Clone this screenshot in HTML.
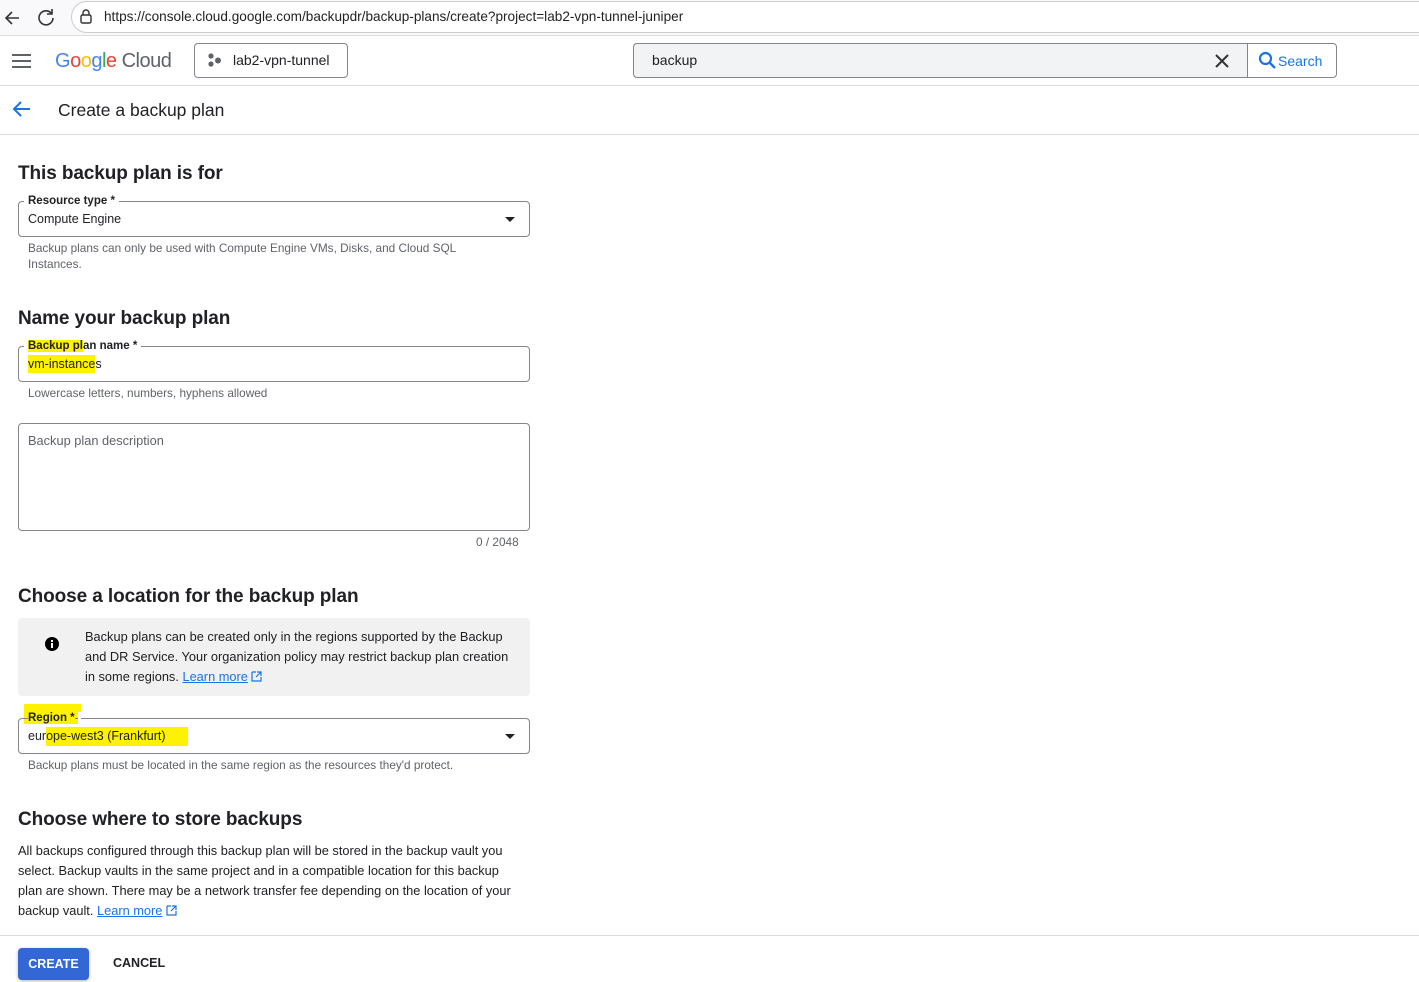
<!DOCTYPE html>
<html><head><meta charset="utf-8"><style>
*{box-sizing:border-box;margin:0;padding:0}
body{width:1419px;height:982px;overflow:hidden;background:#fff;font-family:"Liberation Sans",Arial,sans-serif;color:#202124;position:relative}
.a{position:absolute}
.h2{font-size:19px;font-weight:bold;color:#202124;left:18px;letter-spacing:-0.1px}
.field{left:18px;width:512px;height:36px;border:1px solid #80868b;border-radius:4px}
.lab{font-size:11.5px;font-weight:bold;background:#fff;padding:0 4px 0 4px;left:5px;top:-7px;color:#202124}
.val{font-size:12.5px;left:9px;top:10px}
.help{font-size:11.8px;color:#5f6368;left:28px;line-height:16px}
.hl{background:#fff200}
.caret{right:14px;top:15px;width:0;height:0;border-left:5px solid transparent;border-right:5px solid transparent;border-top:5px solid #202124}
a{color:#1a73e8;text-decoration:underline}
.p{white-space:nowrap}
</style></head><body>
<div class="a" style="left:0;top:0;width:1419px;height:36px;background:#f9f9fb;border-bottom:1px solid #ddd"></div>
<svg class="a" style="left:2px;top:8px" width="20" height="20"><path d="M17 10H4M10 4L4 10L10 16" stroke="#333" stroke-width="1.6" fill="none"/></svg>
<svg class="a" style="left:36px;top:7px" width="20" height="20"><path d="M15.5 6.5A7 7 0 1 0 17 11" stroke="#333" stroke-width="1.6" fill="none"/><path d="M16 2v5h-5" stroke="#333" stroke-width="1.6" fill="none"/></svg>
<div class="a" style="left:71px;top:1px;width:1400px;height:32px;border:1px solid #ccc;border-radius:16px;background:#fff"></div>
<svg class="a" style="left:79px;top:9px" width="14" height="16"><rect x="2" y="6" width="10" height="8" rx="1.5" stroke="#333" fill="none" stroke-width="1.4"/><path d="M4 6V4a3 3 0 0 1 6 0v2" stroke="#333" fill="none" stroke-width="1.4"/></svg>
<div class="a" style="left:104px;top:9px;font-size:13.6px;color:#222">https://console.cloud.google.com/backupdr/backup-plans/create?project=lab2-vpn-tunnel-juniper</div>
<div class="a" style="left:12px;top:54px;width:19px;height:2px;background:#5f6368;box-shadow:0 6px 0 #5f6368,0 12px 0 #5f6368"></div>
<div class="a" style="left:55px;top:50px;font-size:20px;letter-spacing:-0.5px"><span style="color:#4285f4">G</span><span style="color:#ea4335">o</span><span style="color:#fbbc05">o</span><span style="color:#4285f4">g</span><span style="color:#34a853">l</span><span style="color:#ea4335">e</span> <span style="color:#5f6368">Cloud</span></div>
<div class="a" style="left:194px;top:43px;width:154px;height:35px;border:1px solid #80868b;border-radius:4px"></div>
<svg class="a" style="left:207px;top:53px" width="16" height="16"><circle cx="4" cy="3" r="2.6" fill="#5f6368"/><circle cx="4" cy="11" r="2.6" fill="#5f6368"/><circle cx="11" cy="7.5" r="3" fill="#5f6368"/></svg>
<div class="a" style="left:233px;top:52px;font-size:14px">lab2-vpn-tunnel</div>
<div class="a" style="left:633px;top:43px;width:615px;height:35px;border:1px solid #80868b;border-right:none;border-radius:4px 0 0 4px;background:#f1f3f4"></div>
<div class="a" style="left:652px;top:52px;font-size:14px">backup</div>
<svg class="a" style="left:1215px;top:54px" width="14" height="14"><path d="M1 1L13 13M13 1L1 13" stroke="#333" stroke-width="2"/></svg>
<div class="a" style="left:1247px;top:43px;width:90px;height:35px;border:1px solid #80868b;border-radius:0 4px 4px 0"></div>
<svg class="a" style="left:1258px;top:51px" width="19" height="19"><circle cx="7.5" cy="7.5" r="5.5" stroke="#1a73e8" stroke-width="2.2" fill="none"/><path d="M11.5 11.5L17 17" stroke="#1a73e8" stroke-width="2.4"/></svg>
<div class="a" style="left:1278px;top:53px;font-size:14px;color:#1a73e8">Search</div>
<div class="a" style="left:0;top:85px;width:1419px;height:1px;background:#dadce0"></div>
<svg class="a" style="left:12px;top:100px" width="20" height="18"><path d="M18 9H3M9 2L2 9L9 16" stroke="#1a73e8" stroke-width="2" fill="none"/></svg>
<div class="a" style="left:58px;top:100px;font-size:17.5px">Create a backup plan</div>
<div class="a" style="left:0;top:134px;width:1419px;height:1px;background:#dadce0"></div>

<div class="a h2" style="top:163px">This backup plan is for</div>
<div class="a field" style="top:201px"><div class="a lab">Resource type *</div><div class="a val">Compute Engine</div><div class="a caret"></div></div>
<div class="a help" style="top:240px">Backup plans can only be used with Compute Engine VMs, Disks, and Cloud SQL<br>Instances.</div>

<div class="a h2" style="top:308px">Name your backup plan</div>
<div class="a field" style="top:346px"><div class="a lab"><span class="hl">Backup pl</span>an name *</div><div class="a val" style="top:10px"><span class="hl" style="padding:2px 0">vm-instance</span>s</div></div>
<div class="a help" style="top:385px">Lowercase letters, numbers, hyphens allowed</div>
<div class="a" style="left:18px;top:423px;width:512px;height:108px;border:1px solid #80868b;border-radius:4px"></div>
<div class="a" style="left:28px;top:433px;font-size:12.8px;color:#5f6368">Backup plan description</div>
<div class="a" style="left:476px;top:535px;font-size:11.8px;color:#5f6368">0 / 2048</div>

<div class="a h2" style="top:586px">Choose a location for the backup plan</div>
<div class="a" style="left:18px;top:618px;width:512px;height:78px;background:#f1f1f1;border-radius:4px"></div>
<svg class="a" style="left:45px;top:637px" width="14" height="14"><circle cx="7" cy="7" r="7" fill="#000"/><rect x="6" y="6" width="2" height="5" fill="#fff"/><rect x="6" y="3" width="2" height="2" fill="#fff"/></svg>
<div class="a p" style="left:85px;top:627px;font-size:12.8px;line-height:20px">Backup plans can be created only in the regions supported by the Backup<br>and DR Service. Your organization policy may restrict backup plan creation<br>in some regions. <a>Learn more</a> <svg width="11" height="11" style="vertical-align:-1px"><path d="M1 1h4M1 1v9h9V6M6 1h4v4M10 1L5 6" stroke="#1a73e8" fill="none" stroke-width="1.2"/></svg></div>
<div class="a hl" style="left:24px;top:704px;width:57px;height:20px"></div>
<div class="a field" style="top:718px"><div class="a lab" style="background:transparent"><span style="background:#fff200">Region *</span> <span style="background:#fff">&nbsp;</span></div><div class="a val">eur<span class="hl" style="padding:2px 22px 3px 0">ope-west3 (Frankfurt)</span></div><div class="a caret"></div></div>
<div class="a help" style="top:757px">Backup plans must be located in the same region as the resources they'd protect.</div>

<div class="a h2" style="top:809px">Choose where to store backups</div>
<div class="a p" style="left:18px;top:841px;font-size:12.8px;line-height:20px">All backups configured through this backup plan will be stored in the backup vault you<br>select. Backup vaults in the same project and in a compatible location for this backup<br>plan are shown. There may be a network transfer fee depending on the location of your<br>backup vault. <a>Learn more</a> <svg width="11" height="11" style="vertical-align:-1px"><path d="M1 1h4M1 1v9h9V6M6 1h4v4M10 1L5 6" stroke="#1a73e8" fill="none" stroke-width="1.2"/></svg></div>

<div class="a" style="left:0;top:935px;width:1419px;height:1px;background:#dadce0"></div>
<div class="a" style="left:18px;top:948px;width:71px;height:32px;background:#3367d6;border-radius:4px;box-shadow:0 1px 3px rgba(0,0,0,.3);color:#fff;font-size:12.5px;font-weight:bold;text-align:center;line-height:32px">CREATE</div>
<div class="a" style="left:113px;top:956px;font-size:12.5px;font-weight:bold">CANCEL</div>
</body></html>
